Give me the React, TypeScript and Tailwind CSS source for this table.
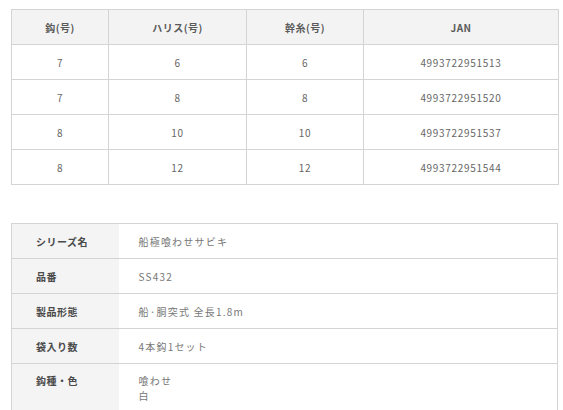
const font = { fontFamily: '"Noto Sans CJK JP", "Noto Sans", sans-serif' }

const sizes = [
  { hook: '7', harisu: '6', mikio: '6', jan: '4993722951513' },
  { hook: '7', harisu: '8', mikio: '8', jan: '4993722951520' },
  { hook: '8', harisu: '10', mikio: '10', jan: '4993722951537' },
  { hook: '8', harisu: '12', mikio: '12', jan: '4993722951544' },
]

const specs: { label: string; value: string[] }[] = [
  { label: 'シリーズ名', value: ['船極喰わせサビキ'] },
  { label: '品番', value: ['SS432'] },
  { label: '製品形態', value: ['船·胴突式 全長1.8m'] },
  { label: '袋入り数', value: ['4本鈎1セット'] },
  { label: '鈎種・色', value: ['喰わせ', '白'] },
]

/** Size table with the JAN codes. */
function SizeTable() {
  const th = 'h-[35px] border border-[#d4d4d4] bg-[#f3f3f3] text-center text-[10px] font-bold tracking-[0.5px] text-[#5a5a5a]'
  const td = 'h-[35px] border border-[#d4d4d4] text-center text-[10px] tracking-[0.7px] text-[#666]'
  return (
    <table className="w-[547px] table-fixed border-collapse">
      <colgroup>
        <col className="w-[97px]" />
        <col className="w-[138px]" />
        <col className="w-[117px]" />
        <col className="w-[195px]" />
      </colgroup>
      <thead>
        <tr>
          <th className={th}>鈎(号)</th>
          <th className={th}>ハリス(号)</th>
          <th className={th}>幹糸(号)</th>
          <th className={th}>JAN</th>
        </tr>
      </thead>
      <tbody>
        {sizes.map((r) => (
          <tr key={r.jan}>
            <td className={td}>{r.hook}</td>
            <td className={td}>{r.harisu}</td>
            <td className={td}>{r.mikio}</td>
            <td className={td}>{r.jan}</td>
          </tr>
        ))}
      </tbody>
    </table>
  )
}

/** Label / value spec sheet. */
function SpecTable() {
  return (
    <table className="w-[547px] table-fixed border-collapse">
      <colgroup>
        <col className="w-[107px]" />
        <col />
      </colgroup>
      <tbody>
        {specs.map((s) => {
          const multi = s.value.length > 1
          return (
            <tr key={s.label}>
              <th
                className={`h-[35px] border-y border-l border-[#d4d4d4] bg-[#f4f4f4] pl-[24px] text-left text-[10px] font-bold tracking-[0.5px] text-[#4a4a4a] ${multi ? 'pt-[9px] align-top' : 'align-middle'}`}
              >
                {s.label}
              </th>
              <td
                className={`h-[35px] border-y border-r border-[#d4d4d4] pl-[20px] text-left text-[10px] tracking-[1.2px] text-[#777] ${multi ? 'pt-[9px] pb-[14px] align-top leading-[15px]' : 'align-middle'}`}
              >
                {s.value.map((v) => (
                  <div key={v}>{v}</div>
                ))}
              </td>
            </tr>
          )
        })}
      </tbody>
    </table>
  )
}

export default function App() {
  return (
    <div className="h-[410px] w-[563px] overflow-hidden bg-white pl-[11px] pt-[9px]" style={font}>
      <SizeTable />
      <div className="mt-[38px]">
        <SpecTable />
      </div>
    </div>
  )
}
